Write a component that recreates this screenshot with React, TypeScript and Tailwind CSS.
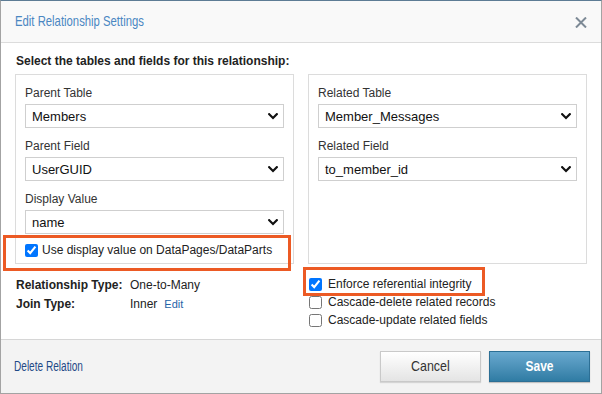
import React from "react";

function Chevron() {
  return (
    <svg width="10" height="7" viewBox="0 0 10 7" className="shrink-0">
      <path d="M1.2 1.2 L5 5 L8.8 1.2" fill="none" stroke="#111" strokeWidth="2.2" strokeLinecap="square" />
    </svg>
  );
}

function Select({ value }: { value: string }) {
  return (
    <div className="mt-[4px] flex h-[24px] items-center justify-between border border-[#cfcfcf] bg-white pl-[6px] pr-[5px] text-[13px] leading-none text-[#111]">
      <span>{value}</span>
      <Chevron />
    </div>
  );
}

function Field({ label, value, first }: { label: string; value: string; first?: boolean }) {
  return (
    <div className={first ? "" : "mt-[11px]"}>
      <div className="text-[12px] leading-[14px] text-[#333]">{label}</div>
      <Select value={value} />
    </div>
  );
}

function Check({ checked, label, gap }: { checked?: boolean; label: string; gap?: string }) {
  return (
    <label className={`flex items-center ${gap ?? "gap-[6px]"} text-[12px] leading-[14px] text-[#222]`}>
      <input type="checkbox" defaultChecked={checked} className="m-0 h-[13px] w-[13px] shrink-0" />
      <span>{label}</span>
    </label>
  );
}

export default function App() {
  return (
    <div className="relative flex h-[394px] w-[602px] flex-col border border-[#a3a3a3] border-t-[#5d7c95] bg-white font-['Liberation_Sans',Arial,sans-serif]">
      {/* Header */}
      <div className="flex h-[42px] items-center justify-between border-b border-[#dcdcdc] bg-[#f9f9f9] pl-[14px] pr-[14px]">
        <div className="mt-[1px] origin-left scale-x-[0.78] whitespace-nowrap text-[14.5px] text-[#4a87c2]">Edit Relationship Settings</div>
        <svg width="12" height="11" viewBox="0 0 12 11" className="mt-[2px]">
          <path d="M1 0.5 L11 10.5 M11 0.5 L1 10.5" stroke="#7d8a96" strokeWidth="2" />
        </svg>
      </div>

      {/* Body */}
      <div className="flex-1 px-[14px] pt-[11px]">
        <div className="pl-[1px] text-[12px] font-bold leading-[14px] text-[#222]">
          Select the tables and fields for this relationship:
        </div>
        <div className="mt-[6px] grid grid-cols-2 gap-[14px]">
          <div className="h-[190px] border border-[#dcdcdc] px-[9px] pt-[11px]">
            <Field first label="Parent Table" value="Members" />
            <Field label="Parent Field" value="UserGUID" />
            <Field label="Display Value" value="name" />
            <div className="mt-[9px]">
              <Check checked gap="gap-[4px]" label="Use display value on DataPages/DataParts" />
            </div>
          </div>
          <div className="h-[190px] border border-[#dcdcdc] px-[9px] pt-[11px]">
            <Field first label="Related Table" value="Member_Messages" />
            <Field label="Related Field" value="to_member_id" />
          </div>
        </div>
        <div className="grid grid-cols-2 gap-[14px]">
          <div className="pl-[1px] pt-[14px] text-[12px] leading-[14px] text-[#222]">
            <div className="flex">
              <span className="w-[114px] font-bold">Relationship Type:</span>
              <span>One-to-Many</span>
            </div>
            <div className="mt-[5px] flex items-baseline">
              <span className="w-[114px] font-bold">Join Type:</span>
              <span>Inner</span>
              <span className="ml-[7px] text-[11px] text-[#2563a8]">Edit</span>
            </div>
          </div>
          <div className="flex flex-col gap-[4px] pl-[1px] pt-[13px]">
            <Check checked label="Enforce referential integrity" />
            <Check label="Cascade-delete related records" />
            <Check label="Cascade-update related fields" />
          </div>
        </div>
      </div>

      {/* Footer */}
      <div className="flex h-[54px] items-center justify-between border-t border-[#d6d6d6] bg-[#f3f3f3] pl-[13px] pr-[11px]">
        <span className="origin-left scale-x-[0.72] whitespace-nowrap text-[14px] text-[#1f4a87]">Delete Relation</span>
        <div className="flex gap-[8px]">
          <button className="flex h-[31px] w-[101px] items-center justify-center border border-[#c9c9c9] bg-gradient-to-b from-[#ffffff] to-[#e4e4e4] text-[15px] text-[#333] shadow-[0_1px_1px_rgba(0,0,0,0.12)]">
            <span className="scale-x-[0.83] whitespace-nowrap">Cancel</span>
          </button>
          <button className="flex h-[31px] w-[101px] items-center justify-center border border-[#2c6f95] bg-gradient-to-b from-[#69a9cf] to-[#2f7ca4] text-[15px] font-bold text-white shadow-[0_1px_1px_rgba(0,0,0,0.2)]">
            <span className="scale-x-[0.8] whitespace-nowrap">Save</span>
          </button>
        </div>
      </div>

      {/* Annotation highlights */}
      <div className="absolute left-[2px] top-[234px] h-[36px] w-[288px] border-[3px] border-[#ec5a24]" />
      <div className="absolute left-[302px] top-[266px] h-[29px] w-[182px] border-[3px] border-[#ec5a24]" />
    </div>
  );
}
